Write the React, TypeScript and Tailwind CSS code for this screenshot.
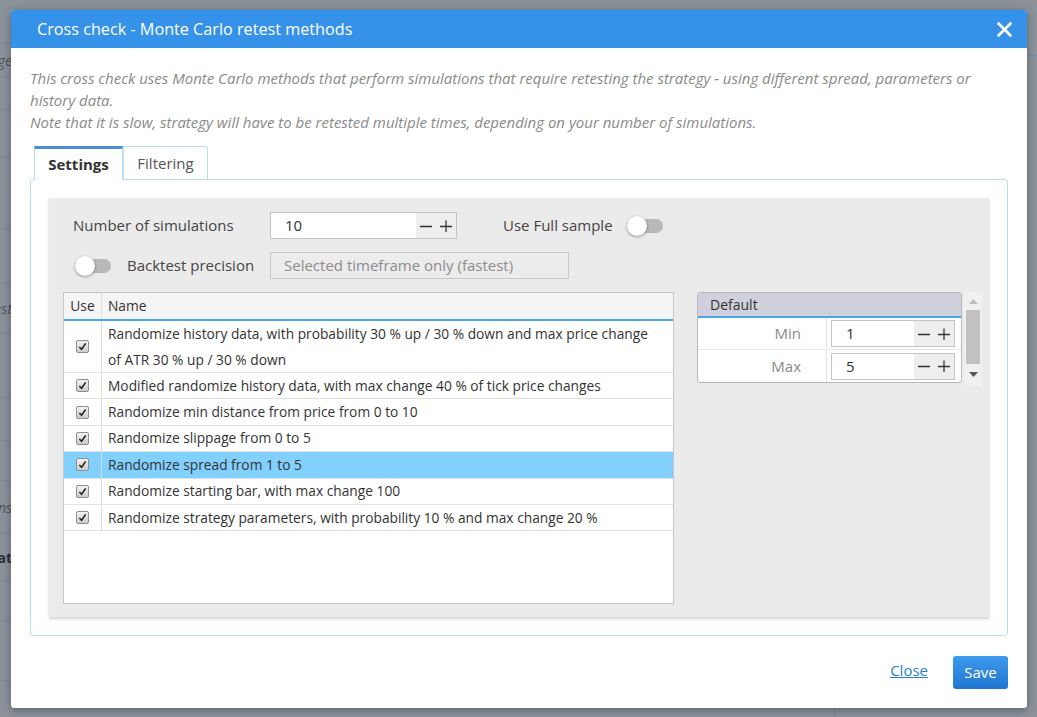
import React, { useState } from "react";

const font = { fontFamily: '"Open Sans", "Noto Sans", Arial, sans-serif' };

const rows = [
  { text: "Randomize history data, with probability 30 % up / 30 % down and max price change", text2: "of ATR 30 % up / 30 % down" },
  { text: "Modified randomize history data, with max change 40 % of tick price changes" },
  { text: "Randomize min distance from price from 0 to 10" },
  { text: "Randomize slippage from 0 to 5" },
  { text: "Randomize spread from 1 to 5", selected: true },
  { text: "Randomize starting bar, with max change 100" },
  { text: "Randomize strategy parameters, with probability 10 % and max change 20 %" },
];

function Check() {
  return (
    <div className="w-[13px] h-[13px] rounded-[2px] border border-[#8f8f8f] bg-gradient-to-b from-[#f2f2f2] to-[#cccccc] flex items-center justify-center">
      <svg width="9" height="9" viewBox="0 0 10 10">
        <path d="M1.5 5.5 L4 8 L8.5 1.5" fill="none" stroke="#222" strokeWidth="1.8" />
      </svg>
    </div>
  );
}

function Toggle() {
  return (
    <div className="relative w-[37px] h-[22px] flex items-center">
      <div className="w-[36px] h-[14px] rounded-full bg-[#b8b8b8]" />
      {/* knob sits over the track */}
      <div className="absolute left-0 top-[1px] w-[20px] h-[20px] rounded-full bg-white shadow-[0_1px_3px_rgba(0,0,0,0.4)]" />
    </div>
  );
}

function Stepper({ value, w }: { value: string; w: string }) {
  return (
    <div className={`flex h-[27px] border border-[#c4c4c4] bg-white shrink-0 ${w}`}>
      <div className="flex-1 pl-[14px] flex items-center text-[15px] text-[#333]">{value}</div>
      <div className="w-[40px] bg-[#eeeeee] flex items-center justify-center gap-[8px]">
        <svg width="12" height="12" viewBox="0 0 12 12">
          <path d="M0 6.5 H12" stroke="#333" strokeWidth="1.3" />
        </svg>
        <svg width="12" height="12" viewBox="0 0 12 12">
          <path d="M0 6.5 H12 M6 0.5 V12" stroke="#333" strokeWidth="1.3" />
        </svg>
      </div>
    </div>
  );
}

function Background() {
  const left = [
    { h: 44, t: "" },
    { h: 33, t: "Range" },
    { h: 34, t: "" },
    { h: 47, t: "" },
    { h: 71, t: "" },
    { h: 55, t: "" },
    { h: 50, t: "Backtest" },
    { h: 65, t: "" },
    { h: 42, t: "" },
    { h: 40, t: "" },
    { h: 53, t: "Positions" },
    { h: 47, t: "Stat", b: true },
    { h: 40, t: "" },
    { h: 60, t: "" },
  ];
  return (
    <div className="flex w-full h-full">
      <div className="w-[12px] flex flex-col">
        {left.map((r, i) => (
          <div
            key={i}
            style={{ height: r.h }}
            className={`flex items-center justify-end overflow-hidden whitespace-nowrap border-b border-[#7e868e] text-[14px] ${r.b ? "font-bold text-[#2a2f35]" : "italic text-[#4d545b]"}`}
          >
            {r.t}
          </div>
        ))}
      </div>
      <div className="flex-1 flex flex-col justify-end">
        <div className="h-[9px] flex">
          <div className="w-[822px]" />
          <div className="w-px bg-[#7a828a]" />
        </div>
      </div>
      <div className="w-[10px] flex flex-col">
        <div className="h-[56px] border-b border-[#6f8fb5]" />
      </div>
    </div>
  );
}

export default function App() {
  const [tab, setTab] = useState("settings");

  return (
    <div style={font} className="relative w-[1037px] h-[717px] bg-[#8b9299] overflow-hidden">
      <Background />

      {/* modal dialog over the app */}
      <div className="absolute left-[11px] top-[10px] w-[1016px] h-[698px] bg-white rounded-[3px] shadow-[0_2px_8px_rgba(0,0,0,0.35)] flex flex-col overflow-hidden">
        {/* header */}
        <div className="h-[38px] bg-[#3592e8] flex items-center justify-between pl-[26px] pr-[15px]">
          <span className="text-white text-[16.2px]">Cross check - Monte Carlo retest methods</span>
          <svg width="15" height="15" viewBox="0 0 15 15">
            <path d="M1.5 1.5 L13.5 13.5 M13.5 1.5 L1.5 13.5" stroke="white" strokeWidth="2.6" strokeLinecap="round" />
          </svg>
        </div>

        {/* body */}
        <div className="flex-1 flex flex-col px-[19px] pt-[19px] pb-[19px]">
          <div className="italic text-[15px] leading-[22px] text-[#8a8a8a]">
            <p>
              This cross check uses Monte Carlo methods that perform simulations that require retesting the strategy - using different spread, parameters or history data.
            </p>
            <p>Note that it is slow, strategy will have to be retested multiple times, depending on your number of simulations.</p>
          </div>

          {/* tabs */}
          <div className="flex items-end ml-[4px] mt-[12px] h-[34px]">
            <button
              onClick={() => setTab("settings")}
              className="h-[34px] w-[89px] bg-white border-t-[3px] border-t-[#4a90d9] border-x border-[#b9dcf7] text-[15px] font-bold text-[#333] flex items-center justify-center -mb-px relative z-10"
            >
              Settings
            </button>
            <button
              onClick={() => setTab("filtering")}
              className="h-[33px] w-[85px] bg-white border border-b-0 border-[#b9dcf7] rounded-tr-[3px] text-[15px] text-[#555] flex items-center justify-center"
            >
              Filtering
            </button>
          </div>

          <div className="border border-[#b9dcf7] rounded-[3px] px-[18px] pt-[18px] pb-[18px]">
            <div className="bg-[#ebebeb] h-[419px] shadow-[0_2px_3px_rgba(0,0,0,0.18)] pl-[14px] pr-[8px] pt-[14px] flex flex-col">
              {/* row 1 */}
              <div className="flex items-center h-[27px]">
                <span className="w-[207px] pl-[10px] text-[15px] text-[#444]">Number of simulations</span>
                <Stepper value="10" w="w-[187px]" />
                <span className="ml-[46px] text-[15px] text-[#444]">Use Full sample</span>
                <div className="ml-[14px]">
                  <Toggle />
                </div>
              </div>
              {/* row 2 */}
              <div className="flex items-center h-[27px] mt-[13px]">
                <div className="ml-[12px]">
                  <Toggle />
                </div>
                <span className="ml-[15px] w-[143px] text-[15px] text-[#444]">Backtest precision</span>
                <div className="w-[299px] h-[27px] border border-[#c8c8c8] bg-[#ececec] flex items-center pl-[13px] text-[15px] text-[#8c8c8c]">
                  Selected timeframe only (fastest)
                </div>
              </div>

              {/* table + right panel */}
              <div className="flex items-start mt-[13px]">
                <div className="w-[611px] shrink-0 h-[312px] border border-[#c6c6c6] bg-white flex flex-col text-[13.75px] text-[#333]">
                  <div className="flex h-[28px] bg-[#f5f5f5] border-b-2 border-[#4aa7ee]">
                    <div className="w-[38px] border-r border-[#dcdcdc] flex items-center justify-center">Use</div>
                    <div className="flex-1 flex items-center pl-[6px]">Name</div>
                  </div>
                  {rows.map((r, i) => (
                    <div
                      key={i}
                      className={`flex border-b border-[#e2e2e2] ${r.text2 ? "h-[52px]" : "h-[26.4px]"} ${r.selected ? "bg-[#82d0fd]" : ""}`}
                    >
                      <div className="w-[38px] border-r border-[#dcdcdc] flex items-center justify-center">
                        <Check />
                      </div>
                      <div className="flex-1 flex flex-col justify-center pl-[6px] leading-[26px] whitespace-nowrap">
                        <span>{r.text}</span>
                        {r.text2 && <span>{r.text2}</span>}
                      </div>
                    </div>
                  ))}
                </div>

                <div className="ml-[23px] w-[265px] shrink-0 border border-[#b8b8b8] rounded-[3px] bg-white overflow-hidden">
                  <div className="h-[25px] bg-[#cfd0db] border-b-2 border-[#4aa7ee] flex items-center pl-[12px] text-[14px] text-[#333]">
                    Default
                  </div>
                  {[
                    ["Min", "1"],
                    ["Max", "5"],
                  ].map(([k, v], i) => (
                    <div key={k} className={`flex h-[32px] items-center ${i === 0 ? "border-b border-[#e6e6e6]" : ""}`}>
                      <div className="w-[129px] h-full border-r border-[#e2e2e2] flex items-center justify-end pr-[25px] text-[15px] text-[#8a8a8a]">
                        {k}
                      </div>
                      <div className="pl-[4px]">
                        <Stepper value={v} w="w-[124px]" />
                      </div>
                    </div>
                  ))}
                </div>

                <div className="ml-[2px] w-[18px] shrink-0 h-[94px] bg-[#f0f0f0] flex flex-col items-center">
                  <div className="h-[18px] flex items-center justify-center">
                    <svg width="9" height="6" viewBox="0 0 9 6">
                      <path d="M0 6 L4.5 1 L9 6 Z" fill="#bdbdbd" />
                    </svg>
                  </div>
                  <div className="w-[14px] h-[54px] bg-[#c2c2c2]" />
                  <div className="flex-1 flex items-center justify-center">
                    <svg width="9" height="6" viewBox="0 0 9 6">
                      <path d="M0 0 L9 0 L4.5 5 Z" fill="#555" />
                    </svg>
                  </div>
                </div>
              </div>
            </div>
          </div>

          {/* footer */}
          <div className="flex-1 flex items-end justify-end gap-[25px]">
            <a href="#" className="text-[15px] text-[#2a7fd4] underline mb-[8px]">
              Close
            </a>
            <button className="w-[55px] h-[33px] rounded-[3px] bg-gradient-to-b from-[#3d9aee] to-[#1f76cf] text-white text-[15px]">
              Save
            </button>
          </div>
        </div>
      </div>
    </div>
  );
}
